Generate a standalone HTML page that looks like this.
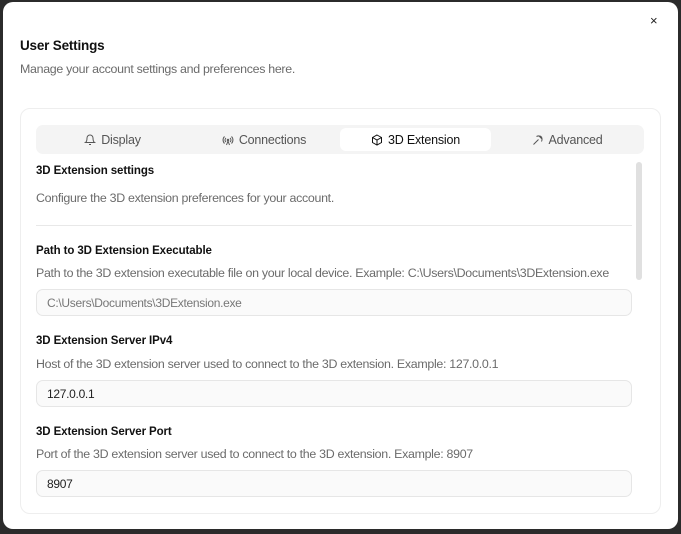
<!DOCTYPE html>
<html><head><meta charset="utf-8"><style>
*{box-sizing:border-box;margin:0;padding:0}
body{width:681px;height:534px;background:#2b2b2b;font-family:"Liberation Sans",sans-serif;position:relative;overflow:hidden}
.modal{position:absolute;left:3px;top:2px;width:675px;height:527px;background:#fff;border-radius:10px}
.a{position:absolute;white-space:nowrap}
.t{font-size:13.5px;color:#111;font-weight:600;letter-spacing:-0.2px}
.s{font-size:12.4px;color:#6b6b6b;letter-spacing:-0.3px}
.l{font-size:11.5px;color:#111;font-weight:600;letter-spacing:-0.1px}
.card{position:absolute;left:17px;top:106px;width:641px;height:406px;border:1px solid #eee;border-radius:10px}
.tabs{position:absolute;left:33px;top:123px;width:608px;height:29px;background:#f4f4f4;border-radius:7px}
.tab{position:absolute;top:0;height:29px;line-height:31px;font-size:12.5px;color:#555;text-align:center;letter-spacing:-0.2px}
.act{background:#fff;border-radius:6px;top:3px;height:23px;line-height:25px;color:#111}
.in{position:absolute;left:33px;width:596px;height:27px;border:1px solid #e6e6e6;background:#fafafa;border-radius:7px;font-size:12px;line-height:27px;padding-left:10px;color:#222;letter-spacing:-0.3px}
svg{vertical-align:-2px;margin-right:5px}
</style></head><body>
<div class="modal">
<div class="a" style="left:647px;top:11px;font-size:13px;color:#222">×</div>
<div class="a t" style="left:17px;top:36px">User Settings</div>
<div class="a s" style="left:17px;top:60px">Manage your account settings and preferences here.</div>
<div class="card"></div>
<div class="tabs">
<div class="tab" style="left:0;width:153px"><svg width="12" height="12" viewBox="0 0 24 24" fill="none" stroke="#555" stroke-width="2"><path d="M6 8a6 6 0 0 1 12 0c0 7 3 9 3 9H3s3-2 3-9"/><path d="M10 21h4"/></svg>Display</div>
<div class="tab" style="left:153px;width:150px"><svg width="12" height="12" viewBox="0 0 24 24" fill="none" stroke="#555" stroke-width="2"><path d="M5 5a10 10 0 0 0 0 14M19 5a10 10 0 0 1 0 14M8 8a5 5 0 0 0 0 8M16 8a5 5 0 0 1 0 8"/><circle cx="12" cy="12" r="1.5"/><path d="M12 14l-3 8M12 14l3 8"/></svg>Connections</div>
<div class="tab act" style="left:304px;width:151px"><svg width="12" height="12" viewBox="0 0 24 24" fill="none" stroke="#111" stroke-width="2"><path d="M12 2l9 5v10l-9 5-9-5V7z"/><path d="M3 7l9 5 9-5M12 12v10"/></svg>3D Extension</div>
<div class="tab" style="left:456px;width:150px"><svg width="12" height="12" viewBox="0 0 24 24" fill="none" stroke="#555" stroke-width="2"><path d="M14 4l6 6M3 21l10-10M9 5c4-2 8-1 11 2M19 15c2-4 1-8-2-11"/></svg>Advanced</div>
</div>
<div class="a" style="left:633px;top:160px;width:6px;height:118px;background:#e0e0e0;border-radius:3px"></div>
<div class="a l" style="left:33px;top:163px">3D Extension settings</div>
<div class="a s" style="left:33px;top:189px">Configure the 3D extension preferences for your account.</div>
<div class="a" style="left:33px;top:223px;width:596px;height:1px;background:#e8e8e8"></div>
<div class="a l" style="left:33px;top:243px">Path to 3D Extension Executable</div>
<div class="a s" style="left:33px;top:264px">Path to the 3D extension executable file on your local device. Example: C:\Users\Documents\3DExtension.exe</div>
<div class="in" style="top:287px;color:#777">C:\Users\Documents\3DExtension.exe</div>
<div class="a l" style="left:33px;top:333px">3D Extension Server IPv4</div>
<div class="a s" style="left:33px;top:355px">Host of the 3D extension server used to connect to the 3D extension. Example: 127.0.0.1</div>
<div class="in" style="top:378px">127.0.0.1</div>
<div class="a l" style="left:33px;top:424px">3D Extension Server Port</div>
<div class="a s" style="left:33px;top:445px">Port of the 3D extension server used to connect to the 3D extension. Example: 8907</div>
<div class="in" style="top:468px">8907</div>
</div>
</body></html>
